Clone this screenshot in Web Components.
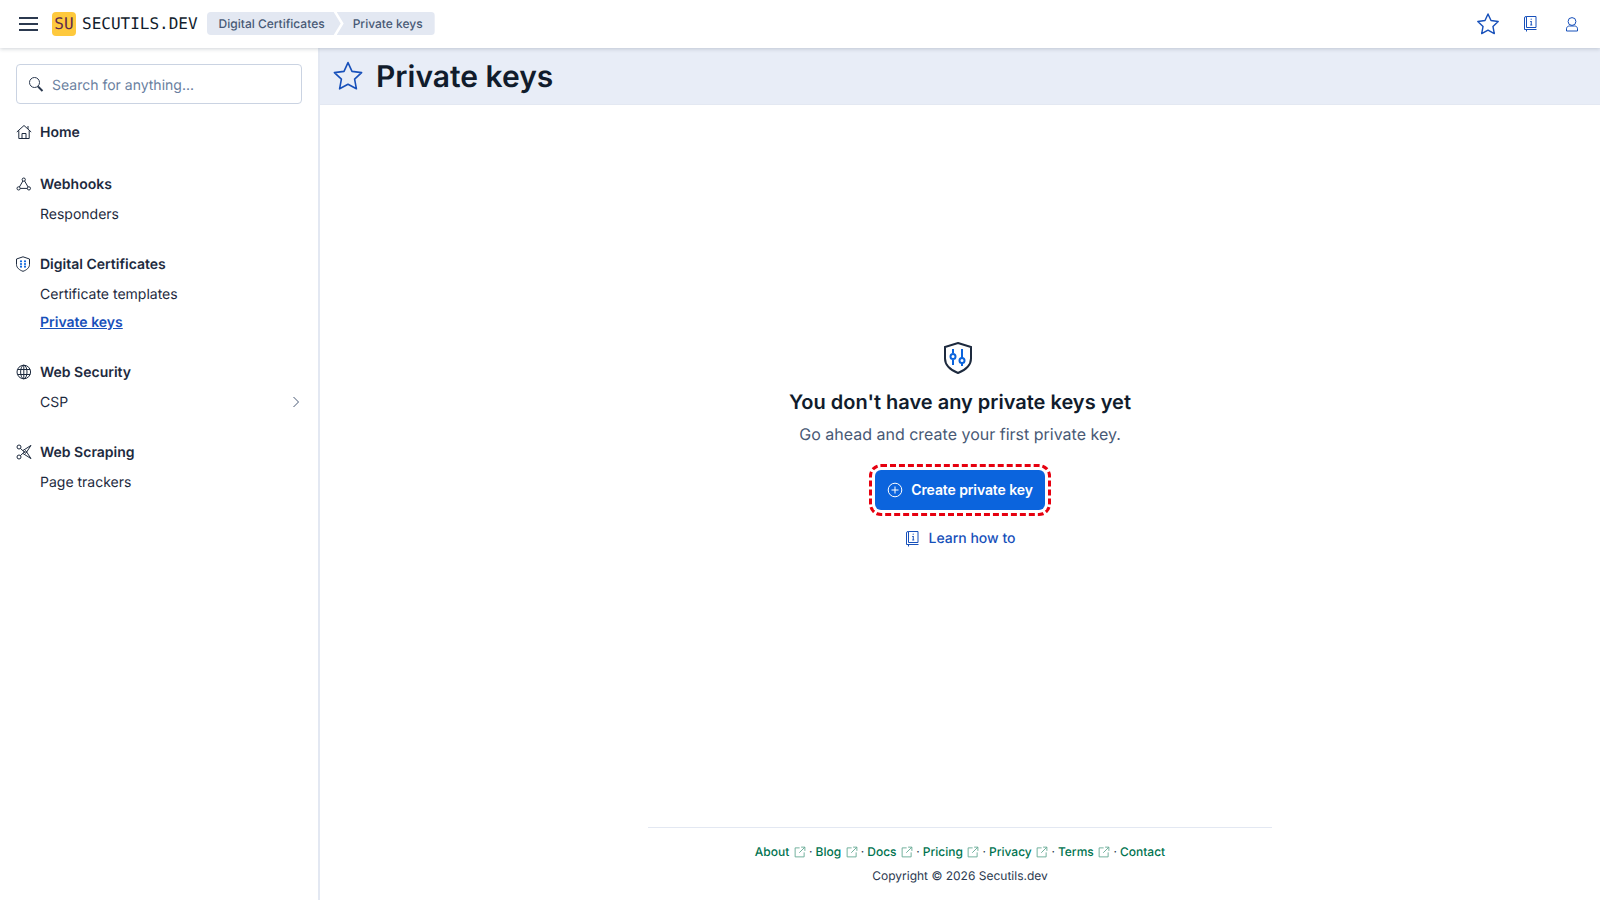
<!DOCTYPE html>
<html lang="en">
<head>
<meta charset="utf-8">
<title>Private keys</title>
<style>
  html, body { margin: 0; height: 100%; }
  body { font-family: Inter, "Liberation Sans", sans-serif; color: #2b394f; background: #fff; overflow: hidden; text-rendering: geometricPrecision; }
  su-app { height: 100vh; }
</style>
</head>
<body>
<su-app>
  <su-header slot="header"></su-header>
  <su-sidebar slot="sidebar">
    <su-nav-group icon="home" label="Home" class="first"></su-nav-group>
    <su-nav-group icon="webhook" label="Webhooks">
      <su-nav-item>Responders</su-nav-item>
    </su-nav-group>
    <su-nav-group icon="shield-dots" label="Digital Certificates">
      <su-nav-item>Certificate templates</su-nav-item>
      <su-nav-item active>Private keys</su-nav-item>
    </su-nav-group>
    <su-nav-group icon="globe" label="Web Security">
      <su-nav-item more>CSP</su-nav-item>
    </su-nav-group>
    <su-nav-group icon="scissors" label="Web Scraping">
      <su-nav-item>Page trackers</su-nav-item>
    </su-nav-group>
  </su-sidebar>
  <su-page-title slot="main">Private keys</su-page-title>
  <su-empty-prompt slot="main"></su-empty-prompt>
  <su-footer slot="main"></su-footer>
</su-app>

<script>
// all icons in one place, drawn on a 16 box unless they say otherwise
const ICONS = {
  star: `<path d="M8 1.300l2 4.400 4.800.6-3.500 3.300.9 4.800L8 12.100l-4.200 2.300.9-4.800L1.200 6.300 6 5.700z" stroke-linejoin="round"/>`,
  book: `<path d="M4.500.5h9.500v11H4.500zM4.500.5H4A1.500 1.500 0 0 0 2.500 2v11.500h12M4.500 13.500v2"/><path d="M9.250 5v4M8.250 9h2M8.250 5.500h1" /><circle cx="9.200" cy="3.200" r=".6" fill="currentColor" stroke="none"/>`,
  user: `<circle cx="8" cy="5.500" r="3.900"/><path d="M2.500 15v-2.200c0-1.700 1.300-2.800 3-2.800h5c1.700 0 3 1.100 3 2.800V15z"/>`,
  search: `<circle cx="6.500" cy="6.500" r="5"/><path d="M10 10.500l4.500 4.500" stroke-width="2"/>`,
  home: `<path d="M.8 8L8 1.500 15.200 8M2.800 6.500V14.500h10.400V6.500M6 14.500V9.500h4v5M12 2v3"/>`,
  webhook: `<circle cx="7.750" cy="3.600" r="1.600"/><circle cx="2.600" cy="12.400" r="1.600"/><circle cx="12.900" cy="12.400" r="1.600"/><path d="M6.900 5L3.400 11M8.600 5l3.500 6M4.200 12.400h7.100"/>`,
  "shield-dots": `<path d="M7 .8l6.500 2.200v5.500c0 3.300-3 5.600-6.500 6.800C3.500 14.100.5 11.800.5 8.500V3z"/><g fill="#0b64dd" stroke="none"><circle cx="5" cy="5.300" r="1.100"/><circle cx="9" cy="5.300" r="1.100"/><circle cx="5" cy="8" r="1.100"/><circle cx="9" cy="8" r="1.100"/><circle cx="5" cy="10.700" r="1.100"/><circle cx="9" cy="10.700" r="1.100"/></g>`,
  globe: `<circle cx="7.800" cy="8" r="6.800"/><ellipse cx="7.800" cy="8" rx="3.200" ry="6.800"/><path d="M7.800 1.200v13.600M1.500 5.500h12.600M1.500 10.500h12.600"/>`,
  scissors: `<circle cx="3" cy="3" r="2"/><circle cx="3" cy="13" r="2"/><path d="M4.400 4.400L10 9.600M15 14.600L10 7M15 14.600L7 9.500M4.400 11.600L10 6.400M15 1.400L10 9M15 1.400L7 6.500"/>`,
  chevron: `<path d="M5.500 3l5 5-5 5"/>`,
  plus: `<circle cx="8" cy="8" r="6.800"/><path d="M8 4.500v7M4.500 8h7"/>`,
  external: `<path d="M7.500 2.500H1.500v12h12V8.500M9.500 1.500h5v5M14.500 1.500L7 9" stroke-width="1.200"/>`,
  "shield-sliders": `<path d="M14 1l13 4v11.500c0 6.500-5.500 11.500-13 14.500C6.500 28 1 23 1 16.500V5z" stroke="#1d2a3e" stroke-width="2"/><g stroke="#0b64dd" stroke-width="2"><path d="M9 7v4M9 18v5M18 7v9M18 21v3"/><circle cx="9" cy="14.500" r="2.500"/><circle cx="18" cy="18.500" r="2.500"/></g>`,
};

class SuIcon extends HTMLElement {
  connectedCallback() {
    const size = this.getAttribute("size") || 16;
    const name = this.getAttribute("name");
    const box = name === "shield-sliders" ? 32 : 16;
    this.attachShadow({ mode: "open" }).innerHTML = `
      <style>
        :host { display: inline-flex; flex: none; width: ${size}px; height: ${size}px; }
        svg { display: block; width: 100%; height: 100%; fill: none; stroke: currentColor; stroke-width: ${this.getAttribute("weight") || 1}; }
      </style>
      <svg viewBox="0 0 ${box} ${box}" aria-hidden="true">${ICONS[name]}</svg>`;
  }
}

class SuApp extends HTMLElement {
  constructor() {
    super();
    this.attachShadow({ mode: "open" }).innerHTML = `
      <style>
        :host { display: flex; flex-direction: column; }
        .body { flex: 1; display: flex; min-height: 0; }
        .main { flex: 1; min-width: 0; display: flex; flex-direction: column; }
      </style>
      <slot name="header"></slot>
      <div class="body">
        <slot name="sidebar"></slot>
        <div class="main"><slot name="main"></slot></div>
      </div>`;
  }
}

class SuHeader extends HTMLElement {
  constructor() {
    super();
    this.attachShadow({ mode: "open" }).innerHTML = `
      <style>
        :host { display: flex; align-items: center; height: 47px; padding: 0 8px 1px 19px; background: #fff;
          box-shadow: 0 1px 4px rgba(43, 57, 79, .22); position: relative; z-index: 1; }
        .burger { width: 19px; height: 14px; display: flex; flex-direction: column; justify-content: space-between; margin-right: 14px; }
        .burger i { display: block; height: 2px; background: #2b394f; }
        .mark { width: 24px; height: 24px; border-radius: 4px; background: #fec93d; color: #5e2b4c;
          font: 400 16px/24px "DejaVu Sans Mono", monospace; text-align: center; }
        .name { margin-left: 6px; color: #111c2c; font: 400 16px/24px "DejaVu Sans Mono", monospace; }
        .crumbs { display: flex; margin-left: 9px; border-radius: 4px; overflow: hidden; font-size: 12px; font-weight: 500; line-height: 24px; color: #485975; }
        .crumbs span { background: #e3e8f2; height: 23px; }
        .crumbs span:first-child { padding: 0 16px 0 12px; margin-right: -4px; clip-path: polygon(0 0, calc(100% - 7px) 0, 100% 50%, calc(100% - 7px) 100%, 0 100%); }
        .crumbs span:last-child { padding: 0 12px 0 16px; clip-path: polygon(0 0, 100% 0, 100% 100%, 0 100%, 7px 50%); }
        .tools { margin-left: auto; display: flex; gap: 2px; color: #1750ba; }
        .tools div { width: 40px; height: 40px; display: flex; align-items: center; justify-content: center; }
      </style>
      <div class="burger"><i></i><i></i><i></i></div>
      <div class="mark">SU</div>
      <div class="name">SECUTILS.DEV</div>
      <div class="crumbs"><span>Digital Certificates</span><span>Private keys</span></div>
      <div class="tools">
        <div><su-icon name="star" size="24" weight=".95"></su-icon></div>
        <div><su-icon name="book"></su-icon></div>
        <div><su-icon name="user"></su-icon></div>
      </div>`;
  }
}

class SuSidebar extends HTMLElement {
  constructor() {
    super();
    this.attachShadow({ mode: "open" }).innerHTML = `
      <style>
        :host { display: block; box-sizing: border-box; width: 320px; padding: 16px 16px 0; border-right: 2px solid #e3e8f2; flex: none; }
        .search { box-sizing: border-box; width: 286px; height: 40px; display: flex; align-items: center; gap: 8px; padding-left: 11px;
          border: 1px solid #cad3e2; border-radius: 4px; color: #6a7fa0; font-size: 14px; margin-bottom: 16px; }
        .search span { padding-top: 2px; }
        su-icon { color: #2b394f; }
      </style>
      <div class="search" role="search"><su-icon name="search"></su-icon><span>Search for anything...</span></div>
      <slot></slot>`;
  }
}

class SuNavGroup extends HTMLElement {
  connectedCallback() {
    this.attachShadow({ mode: "open" }).innerHTML = `
      <style>
        :host { display: block; margin-bottom: 24px; font-size: 14px; }
        :host(.first) { margin-bottom: 28px; }
        .title { display: flex; align-items: center; gap: 8px; height: 24px; font-weight: 600; color: #1d2a3e; }
        .items { display: block; }
        ::slotted(su-nav-item:first-child) { margin-top: 4px; }
      </style>
      <div class="title"><su-icon name="${this.getAttribute("icon")}"></su-icon>${this.getAttribute("label")}</div>
      <div class="items"><slot></slot></div>`;
  }
}

class SuNavItem extends HTMLElement {
  connectedCallback() {
    const more = this.hasAttribute("more");
    this.attachShadow({ mode: "open" }).innerHTML = `
      <style>
        :host { display: flex; align-items: center; justify-content: space-between; height: 28px; padding-left: 24px; color: #1d2a3e; }
        :host([active]) { color: #1750ba; font-weight: 600; text-decoration: underline; }
        su-icon { color: #485975; margin-right: -2px; }
      </style>
      <span><slot></slot></span>
      ${more ? `<su-icon name="chevron"></su-icon>` : ""}`;
  }
}

class SuPageTitle extends HTMLElement {
  constructor() {
    super();
    this.attachShadow({ mode: "open" }).innerHTML = `
      <style>
        :host { display: flex; align-items: center; gap: 12px; height: 56px; padding-left: 12px; background: #e8edf7; border-bottom: 1px solid #e3e8f2; flex: none; }
        su-icon { color: #1750ba; }
        h1 { margin: 0; padding-top: 1px; font-size: 30px; font-weight: 600; line-height: 40px; color: #111c2c; }
      </style>
      <su-icon name="star" size="32" weight=".8"></su-icon>
      <h1><slot></slot></h1>`;
  }
}

class SuEmptyPrompt extends HTMLElement {
  constructor() {
    super();
    this.attachShadow({ mode: "open" }).innerHTML = `
      <style>
        :host { flex: 1; display: flex; flex-direction: column; align-items: center; padding-top: 237px; box-sizing: border-box; }
        .pic { width: 32px; height: 32px; margin-bottom: 14px; }
        h2 { margin: 0 0 6px; font-size: 20px; font-weight: 600; line-height: 28px; color: #111c2c; }
        p { margin: 0 0 24px; font-size: 16px; line-height: 24px; color: #485975; }
        button { box-sizing: border-box; display: flex; align-items: center; gap: 8px; height: 40px; padding: 0 12px; border: 0; border-radius: 6px;
          background: #0b64dd; color: #fff; font: 600 14px Inter, "Liberation Sans", sans-serif; letter-spacing: -.1px; outline: 3px dashed #e6000f; outline-offset: 3px; }
        button span { margin-bottom: 2px; }
        a { display: flex; align-items: center; gap: 8px; margin-top: 19px; font-size: 14px; font-weight: 500; line-height: 20px; color: #1750ba; text-decoration: none; }
      </style>
      <div class="pic"><su-icon name="shield-sliders" size="32"></su-icon></div>
      <h2>You don't have any private keys yet</h2>
      <p>Go ahead and create your first private key.</p>
      <button type="button"><su-icon name="plus"></su-icon><span>Create private key</span></button>
      <a href="#"><su-icon name="book"></su-icon>Learn how to</a>`;
  }
}

class SuFooter extends HTMLElement {
  constructor() {
    super();
    const links = ["About", "Blog", "Docs", "Pricing", "Privacy", "Terms"];
    this.attachShadow({ mode: "open" }).innerHTML = `
      <style>
        :host { display: block; box-sizing: border-box; width: 624px; height: 73px; margin: 0 auto; padding-top: 14px; border-top: 1px solid #e3e8f2; flex: none;
          font-size: 12px; line-height: 20px; text-align: center; }
        .links { display: flex; justify-content: center; align-items: center; color: #2b394f; }
        a { color: #00734f; font-weight: 500; text-decoration: none; }
        su-icon { margin: 0 3.200px 0 4.500px; color: #00734f; opacity: .6; }
        .dot { margin: 0 3px 0 0; }
        .copy { margin-top: 4px; color: #2b394f; }
      </style>
      <div class="links">
        ${links.map((l) => `<a href="#">${l}</a><su-icon name="external" size="12"></su-icon><span class="dot">·</span>`).join("")}
        <a href="#">Contact</a>
      </div>
      <div class="copy">Copyright © 2026 Secutils.dev</div>`;
  }
}

customElements.define("su-icon", SuIcon);
customElements.define("su-app", SuApp);
customElements.define("su-header", SuHeader);
customElements.define("su-sidebar", SuSidebar);
customElements.define("su-nav-group", SuNavGroup);
customElements.define("su-nav-item", SuNavItem);
customElements.define("su-page-title", SuPageTitle);
customElements.define("su-empty-prompt", SuEmptyPrompt);
customElements.define("su-footer", SuFooter);
</script>
</body>
</html>
